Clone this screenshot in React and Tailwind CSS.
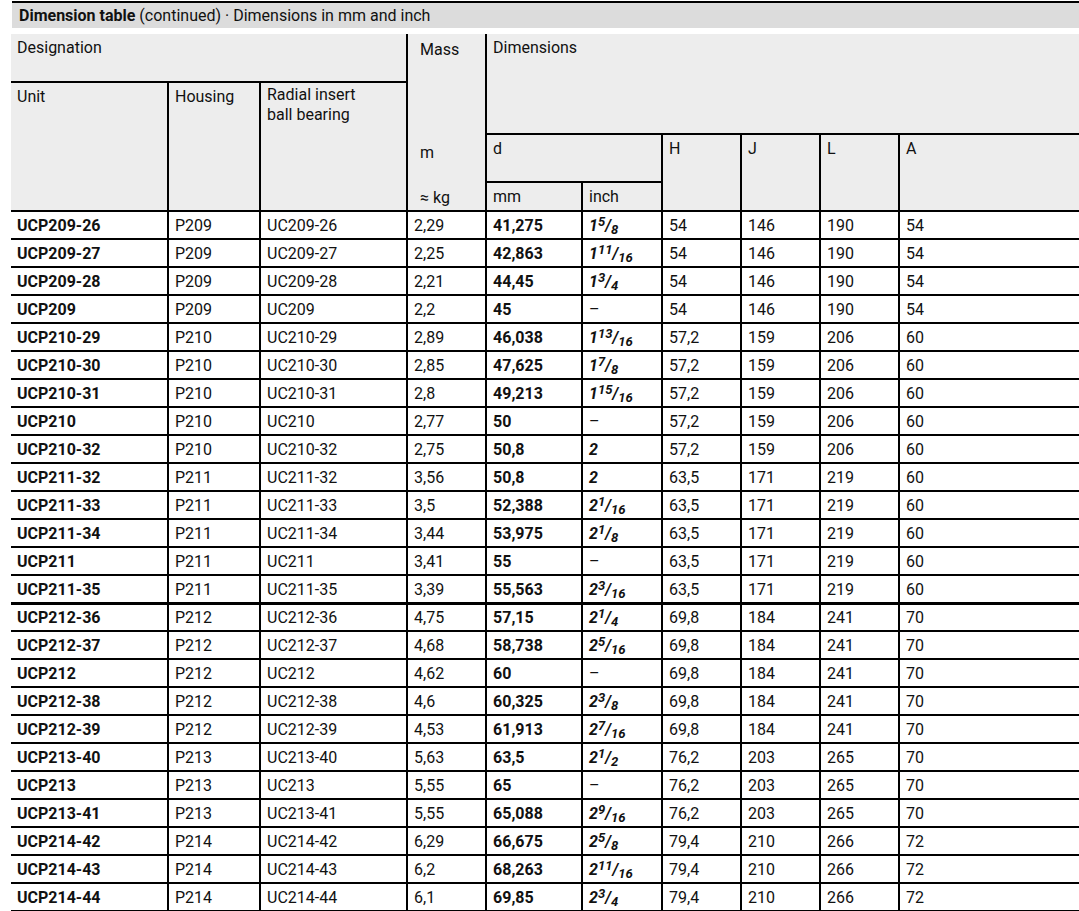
const rows = [
  ['UCP209-26','P209','UC209-26','2,29','41,275','1','5','8','54','146','190','54'],
  ['UCP209-27','P209','UC209-27','2,25','42,863','1','11','16','54','146','190','54'],
  ['UCP209-28','P209','UC209-28','2,21','44,45','1','3','4','54','146','190','54'],
  ['UCP209','P209','UC209','2,2','45','','','','54','146','190','54'],
  ['UCP210-29','P210','UC210-29','2,89','46,038','1','13','16','57,2','159','206','60'],
  ['UCP210-30','P210','UC210-30','2,85','47,625','1','7','8','57,2','159','206','60'],
  ['UCP210-31','P210','UC210-31','2,8','49,213','1','15','16','57,2','159','206','60'],
  ['UCP210','P210','UC210','2,77','50','','','','57,2','159','206','60'],
  ['UCP210-32','P210','UC210-32','2,75','50,8','2','','','57,2','159','206','60'],
  ['UCP211-32','P211','UC211-32','3,56','50,8','2','','','63,5','171','219','60'],
  ['UCP211-33','P211','UC211-33','3,5','52,388','2','1','16','63,5','171','219','60'],
  ['UCP211-34','P211','UC211-34','3,44','53,975','2','1','8','63,5','171','219','60'],
  ['UCP211','P211','UC211','3,41','55','','','','63,5','171','219','60'],
  ['UCP211-35','P211','UC211-35','3,39','55,563','2','3','16','63,5','171','219','60'],
  ['UCP212-36','P212','UC212-36','4,75','57,15','2','1','4','69,8','184','241','70'],
  ['UCP212-37','P212','UC212-37','4,68','58,738','2','5','16','69,8','184','241','70'],
  ['UCP212','P212','UC212','4,62','60','','','','69,8','184','241','70'],
  ['UCP212-38','P212','UC212-38','4,6','60,325','2','3','8','69,8','184','241','70'],
  ['UCP212-39','P212','UC212-39','4,53','61,913','2','7','16','69,8','184','241','70'],
  ['UCP213-40','P213','UC213-40','5,63','63,5','2','1','2','76,2','203','265','70'],
  ['UCP213','P213','UC213','5,55','65','','','','76,2','203','265','70'],
  ['UCP213-41','P213','UC213-41','5,55','65,088','2','9','16','76,2','203','265','70'],
  ['UCP214-42','P214','UC214-42','6,29','66,675','2','5','8','79,4','210','266','72'],
  ['UCP214-43','P214','UC214-43','6,2','68,263','2','11','16','79,4','210','266','72'],
  ['UCP214-44','P214','UC214-44','6,1','69,85','2','3','4','79,4','210','266','72'],
]

function Inch({ w, n, d }) {
  if (!w) return <span>–</span>
  return (
    <span className="font-bold italic">
      {w}
      {n && <span className="text-[13px] relative -top-[5px]">{n}</span>}
      {n && <span>/</span>}
      {d && <span className="text-[13px] relative top-[3px]">{d}</span>}
    </span>
  )
}

const th = 'border-2 border-black bg-[#ededed] align-top text-left font-normal px-[6px] pt-[2px]'
const td = 'border-2 border-black px-[6px] h-[28px] pt-[2px] leading-none'

export default function App() {
  return (
    <div className="bg-white w-[1079px] h-[911px] overflow-hidden pl-[12px] pt-[1px] text-[#111] text-[16px]" style={{ fontFamily: 'Roboto, "Noto Sans", sans-serif' }}>
      <div className="border-t-2 border-black bg-[#dcdcdc] h-[27px] pl-[7px] pt-[3px] leading-[20px] text-[16px] w-[1080px]">
        <b>Dimension table</b> (continued) · Dimensions in mm and inch
      </div>
      <table className="mt-[6px] border-collapse table-fixed w-[1080px] -ml-[1px]">
        <colgroup>
          <col className="w-[157px]" /><col className="w-[92px]" /><col className="w-[147px]" />
          <col className="w-[79px]" /><col className="w-[96px]" /><col className="w-[80px]" />
          <col className="w-[79px]" /><col className="w-[79px]" /><col className="w-[79px]" /><col />
        </colgroup>
        <thead>
          <tr className="h-[48px]">
            <th colSpan={3} className={th + ' border-t-0 border-l-0'}>Designation</th>
            <th rowSpan={4} className={th + ' border-t-0 p-0'}>
              <div className="flex flex-col h-[174px] px-[6px] pt-[2px]">
                <span>Mass</span>
                <span className="mt-[79px]">m</span>
                <span className="mt-auto">≈ kg</span>
              </div>
            </th>
            <th colSpan={6} rowSpan={2} className={th + ' border-t-0 border-r-0'}>Dimensions</th>
          </tr>
          <tr className="h-[51px]">
            <th rowSpan={3} className={th + ' border-l-0'}>Unit</th>
            <th rowSpan={3} className={th}>Housing</th>
            <th rowSpan={3} className={th + ' leading-[20px]'}>Radial insert<br />ball bearing</th>
          </tr>
          <tr className="h-[48px]">
            <th colSpan={2} className={th}>d</th>
            <th rowSpan={2} className={th}>H</th>
            <th rowSpan={2} className={th}>J</th>
            <th rowSpan={2} className={th}>L</th>
            <th rowSpan={2} className={th + ' border-r-0'}>A</th>
          </tr>
          <tr className="h-[29px]">
            <th className={th}>mm</th>
            <th className={th}>inch</th>
          </tr>
        </thead>
        <tbody>
          {rows.map((r, i) => (
            <tr key={i} className={i === 14 ? 'border-t-[3px] border-black' : ''}>
              <td className={td + ' border-l-0 font-bold'}>{r[0]}</td>
              <td className={td}>{r[1]}</td>
              <td className={td}>{r[2]}</td>
              <td className={td}>{r[3]}</td>
              <td className={td + ' font-bold'}>{r[4]}</td>
              <td className={td}><Inch w={r[5]} n={r[6]} d={r[7]} /></td>
              <td className={td}>{r[8]}</td>
              <td className={td}>{r[9]}</td>
              <td className={td}>{r[10]}</td>
              <td className={td + ' border-r-0'}>{r[11]}</td>
            </tr>
          ))}
        </tbody>
      </table>
    </div>
  )
}
